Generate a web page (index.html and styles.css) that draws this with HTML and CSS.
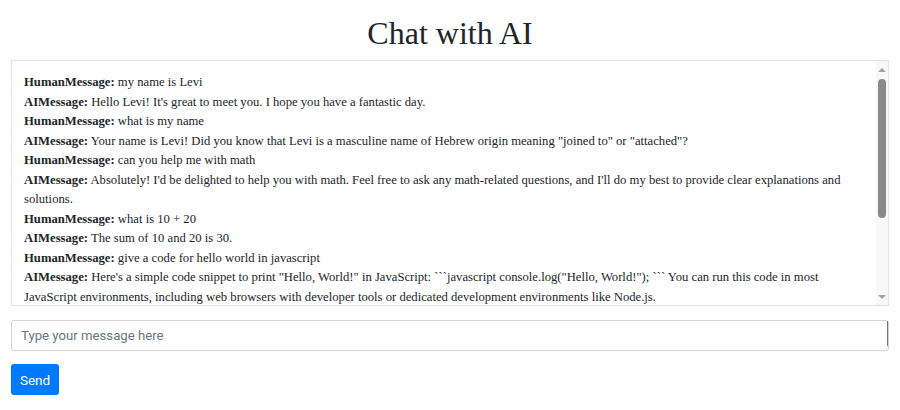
FILE: index.html
```html
<!DOCTYPE html>
<html lang="en">
<head>
<meta charset="utf-8">
<title>Chat with AI</title>
<link rel="stylesheet" href="styles.css">
</head>
<body>
<div class="page">
  <h1 class="title">Chat with AI</h1>
  <div class="chat-box">
    <div class="chat-log">
      <div class="msg"><b>HumanMessage:</b> my name is Levi</div>
      <div class="msg"><b>AIMessage:</b> Hello Levi! It's great to meet you. I hope you have a fantastic day.</div>
      <div class="msg"><b>HumanMessage:</b> what is my name</div>
      <div class="msg"><b>AIMessage:</b> Your name is Levi! Did you know that Levi is a masculine name of Hebrew origin meaning "joined to" or "attached"?</div>
      <div class="msg"><b>HumanMessage:</b> can you help me with math</div>
      <div class="msg"><b>AIMessage:</b> Absolutely! I'd be delighted to help you with math. Feel free to ask any math-related questions, and I'll do my best to provide clear explanations and solutions.</div>
      <div class="msg"><b>HumanMessage:</b> what is 10 + 20</div>
      <div class="msg"><b>AIMessage:</b> The sum of 10 and 20 is 30.</div>
      <div class="msg"><b>HumanMessage:</b> give a code for hello world in javascript</div>
      <div class="msg"><b>AIMessage:</b> Here's a simple code snippet to print "Hello, World!" in JavaScript: ```javascript console.log("Hello, World!"); ``` You can run this code in most JavaScript environments, including web browsers with developer tools or dedicated development environments like Node.js.</div>
    </div>
    <div class="scrollbar">
      <div class="sb-btn"><span class="arrow-up"></span></div>
      <div class="sb-track"><div class="sb-thumb"></div></div>
      <div class="sb-btn"><span class="arrow-down"></span></div>
    </div>
  </div>
  <div class="input-wrap">
    <input class="msg-input" type="text" placeholder="Type your message here">
  </div>
  <button class="send-btn" type="button">Send</button>
</div>
</body>
</html>
```

FILE: styles.css
```css
html, body {
  margin: 0;
  padding: 0;
  background: #ffffff;
}

body {
  font-family: "Liberation Serif", "Times New Roman", serif;
  color: #212529;
}

.page {
  padding: 12px 11px 0 11px;
  display: flex;
  flex-direction: column;
  align-items: stretch;
}

.title {
  margin: 0 0 6px 0;
  text-align: center;
  font-weight: normal;
  font-size: 32px;
  line-height: 42px;
  color: #212529;
}

.chat-box {
  display: flex;
  height: 246px;
  border: 1px solid #e3e3e3;
  box-sizing: border-box;
  overflow: hidden;
}

.chat-log {
  flex: 1;
  padding: 12px 12px 0 12px;
  overflow: hidden;
  font-size: 12.66px;
  line-height: 19.5px;
}

.msg b {
  font-weight: bold;
}

.scrollbar {
  width: 12px;
  flex: none;
  display: flex;
  flex-direction: column;
  background: #f8f8f8;
}

.sb-btn {
  height: 17px;
  display: flex;
  align-items: center;
  justify-content: center;
  flex: none;
}

.arrow-up {
  width: 0;
  height: 0;
  border-left: 4px solid transparent;
  border-right: 4px solid transparent;
  border-bottom: 4px solid #a3a3a3;
}

.arrow-down {
  width: 0;
  height: 0;
  border-left: 4px solid transparent;
  border-right: 4px solid transparent;
  border-top: 4px solid #a3a3a3;
}

.sb-track {
  flex: 1;
  padding: 1px 2px 0 2px;
}

.sb-thumb {
  height: 139px;
  background: #8a8a8a;
  border-radius: 4px;
}

.input-wrap {
  position: relative;
  margin-top: 14px;
}

.input-wrap::after {
  content: "";
  position: absolute;
  right: 1px;
  top: 1px;
  width: 1px;
  height: 25px;
  background: #7a7a7a;
}

.msg-input {
  display: block;
  width: 100%;
  box-sizing: border-box;
  height: 31px;
  padding: 0 9px;
  border: 1px solid #ced4da;
  border-radius: 3px;
  font-family: Roboto, "Open Sans", sans-serif;
  font-size: 13.2px;
  color: #495057;
  outline: none;
}

.msg-input::placeholder {
  color: #6c757d;
}

.send-btn {
  align-self: flex-start;
  margin-top: 13px;
  width: 48px;
  height: 31px;
  padding: 0;
  border: none;
  border-radius: 3px;
  background: #007bff;
  color: #ffffff;
  font-family: Roboto, "Open Sans", sans-serif;
  font-size: 13.5px;
}
```
